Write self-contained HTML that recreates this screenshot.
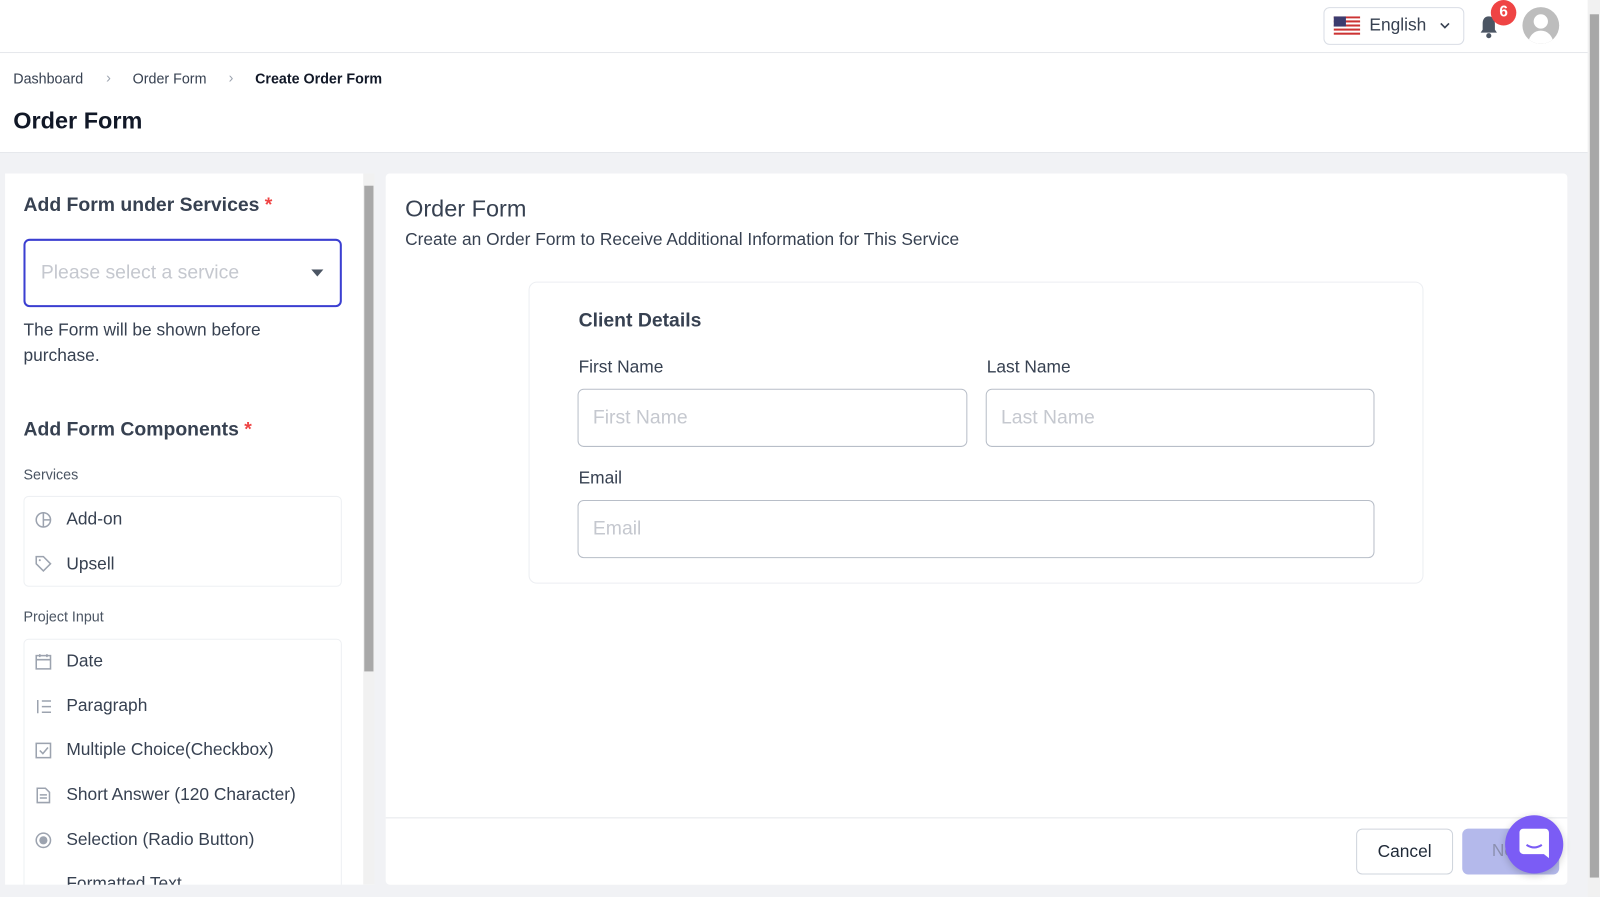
<!DOCTYPE html>
<html><head><style>
*{box-sizing:border-box;margin:0;padding:0}
html,body{width:1600px;height:897px;overflow:hidden}
body{font-family:"Liberation Sans",sans-serif;background:#f1f2f5;color:#1f2937}
#w{position:absolute;left:0;top:0;width:1568px;height:879px;transform:scale(1.020408);transform-origin:0 0;background:#f1f2f5}
.a{position:absolute}
.ph{color:#c5c8cf}
.item{position:absolute;left:65px;font-size:17px;color:#374151}
.ic{position:absolute;left:34px;width:17px;height:17px}
</style></head><body><div id="w">
<div class="a" style="left:0;top:0;width:1556px;height:150px;background:#fff"></div>
<div class="a" style="left:0;top:51px;width:1556px;height:1px;background:#e5e7eb"></div>
<div class="a" style="left:0;top:149px;width:1556px;height:1px;background:#e5e7eb"></div>
<div class="a" style="left:1297px;top:7px;width:138px;height:37px;border:1px solid #d9dde5;border-radius:6px;background:#fff"></div>
<svg class="a" style="left:1307px;top:16px" width="26" height="19"><rect width="26" height="19" fill="#fff"/><g fill="#c33"><rect y="0" width="26" height="2"/><rect y="4" width="26" height="2"/><rect y="8" width="26" height="2"/><rect y="12" width="26" height="2"/><rect y="16" width="26" height="2"/></g><rect width="12" height="10" fill="#3c3b6e"/></svg>
<div class="a" style="left:1342px;top:15px;font-size:17px;color:#374151">English</div>
<svg class="a" style="left:1411px;top:21px" width="10" height="8"><path d="M1 2l4 4 4-4" stroke="#374151" stroke-width="1.6" fill="none"/></svg>
<svg class="a" style="left:1449px;top:14px" width="20" height="24"><path d="M10 2c-4 0-6 3-6 7v6l-2 3h16l-2-3V9c0-4-2-7-6-7z" fill="#4b5563"/><circle cx="10" cy="21" r="2.5" fill="#4b5563"/></svg>
<div class="a" style="left:1461px;top:0;width:25px;height:25px;border-radius:50%;background:#ef4444;color:#fff;font-size:15px;font-weight:bold;text-align:center;line-height:24px">6</div>
<div class="a" style="left:1492px;top:7px;width:36px;height:36px;border-radius:50%;background:#bdbdbd;overflow:hidden"><div class="a" style="left:11px;top:7px;width:14px;height:14px;border-radius:50%;background:#fff"></div><div class="a" style="left:6px;top:23px;width:24px;height:14px;border-radius:12px 12px 0 0;background:#fff"></div></div>
<div class="a" style="left:13px;top:69px;font-size:14px;color:#374151">Dashboard</div>
<div class="a" style="left:104px;top:68px;font-size:14px;color:#9ca3af">›</div>
<div class="a" style="left:130px;top:69px;font-size:14px;color:#374151">Order Form</div>
<div class="a" style="left:224px;top:68px;font-size:14px;color:#9ca3af">›</div>
<div class="a" style="left:250px;top:69px;font-size:14px;color:#111827;font-weight:bold">Create Order Form</div>
<div class="a" style="left:13px;top:105px;font-size:23px;color:#111827;font-weight:bold">Order Form</div>
<div class="a" style="left:1556px;top:0;width:12px;height:879px;background:#f1f1f1"></div>
<div class="a" style="left:1558px;top:14px;width:9px;height:846px;background:#a8a8a8"></div>
<div class="a" style="left:5px;top:170px;width:362px;height:697px;background:#fff;overflow:hidden">
 <div class="a" style="left:351px;top:0;width:11px;height:697px;background:#f1f1f1"></div>
 <div class="a" style="left:352px;top:12px;width:9px;height:476px;background:#a8a8a8"></div>
 <div class="a" style="left:18px;top:21px;font-size:19px;font-weight:bold;color:#374151">Add Form under Services <span style="color:#ef4444">*</span></div>
 <div class="a" style="left:18px;top:64px;width:312px;height:67px;border:2px solid #3b3fd1;border-radius:6px"></div>
 <div class="a ph" style="left:35px;top:87px;font-size:19px">Please select a service</div>
 <svg class="a" style="left:300px;top:94px" width="12" height="7"><path d="M0 0h12L6 7z" fill="#4b5563"/></svg>
 <div class="a" style="left:18px;top:141px;font-size:17px;line-height:25px;color:#374151;width:270px">The Form will be shown before purchase.</div>
 <div class="a" style="left:18px;top:241px;font-size:19px;font-weight:bold;color:#374151">Add Form Components <span style="color:#ef4444">*</span></div>
 <div class="a" style="left:18px;top:287px;font-size:14px;color:#4b5563">Services</div>
 <div class="a" style="left:18px;top:316px;width:312px;height:89px;border:1px solid #eef0f3;border-radius:5px"></div>
 <div class="a" style="left:18px;top:426px;font-size:14px;color:#4b5563">Project Input</div>
 <div class="a" style="left:18px;top:456px;width:312px;height:260px;border:1px solid #eef0f3;border-radius:5px"></div>
</div>
<svg class="ic a" style="top:501px" viewBox="0 0 17 17"><circle cx="8.5" cy="8.5" r="7" fill="none" stroke="#9ca3af" stroke-width="1.5"/><path d="M8.5 1.5v14M8.5 8.5h7" stroke="#9ca3af" stroke-width="1.5"/></svg>
<div class="item" style="top:499px">Add-on</div>
<svg class="ic a" style="top:544px" viewBox="0 0 17 17"><path d="M1.5 1.5h7l7 7-7 7-7-7z" fill="none" stroke="#9ca3af" stroke-width="1.5"/><circle cx="5" cy="5" r="1" fill="#9ca3af"/></svg>
<div class="item" style="top:543px">Upsell</div>
<svg class="ic a" style="top:640px" viewBox="0 0 17 17"><rect x="1.5" y="2.5" width="14" height="13" fill="none" stroke="#9ca3af" stroke-width="1.5"/><path d="M1.5 6.5h14M5 1v3M12 1v3" stroke="#9ca3af" stroke-width="1.5"/></svg>
<div class="item" style="top:638px">Date</div>
<svg class="ic a" style="top:684px" viewBox="0 0 17 17"><path d="M3 2v13M7 3h9M7 8.5h9M7 14h9" stroke="#9ca3af" stroke-width="1.5"/></svg>
<div class="item" style="top:682px">Paragraph</div>
<svg class="ic a" style="top:727px" viewBox="0 0 17 17"><rect x="1.5" y="1.5" width="14" height="14" fill="none" stroke="#9ca3af" stroke-width="1.5"/><path d="M5 8.5l3 3 5-6" stroke="#9ca3af" stroke-width="1.5" fill="none"/></svg>
<div class="item" style="top:725px">Multiple Choice(Checkbox)</div>
<svg class="ic a" style="top:771px" viewBox="0 0 17 17"><path d="M2.5 1.5h8l4 4v10h-12z" fill="none" stroke="#9ca3af" stroke-width="1.5"/><path d="M5 8h7M5 11h7" stroke="#9ca3af" stroke-width="1.5"/></svg>
<div class="item" style="top:769px">Short Answer (120 Character)</div>
<svg class="ic a" style="top:815px" viewBox="0 0 17 17"><circle cx="8.5" cy="8.5" r="7" fill="none" stroke="#9ca3af" stroke-width="1.5"/><circle cx="8.5" cy="8.5" r="4" fill="#9ca3af"/></svg>
<div class="item" style="top:813px">Selection (Radio Button)</div>
<div class="item" style="top:856px;height:11px;overflow:hidden">Formatted Text</div>
<div class="a" style="left:378px;top:170px;width:1158px;height:697px;background:#fff;border-radius:4px"></div>
<div class="a" style="left:378px;top:801px;width:1158px;height:1px;background:#e5e7eb"></div>
<div class="a" style="left:397px;top:191px;font-size:23px;color:#374151">Order Form</div>
<div class="a" style="left:397px;top:225px;font-size:17px;color:#374151">Create an Order Form to Receive Additional Information for This Service</div>
<div class="a" style="left:518px;top:276px;width:877px;height:296px;border:1px solid #eceef2;border-radius:8px"></div>
<div class="a" style="left:567px;top:304px;font-size:19px;font-weight:bold;color:#374151">Client Details</div>
<div class="a" style="left:567px;top:350px;font-size:17px;color:#374151">First Name</div>
<div class="a" style="left:967px;top:350px;font-size:17px;color:#374151">Last Name</div>
<div class="a" style="left:566px;top:381px;width:382px;height:57px;border:1px solid #b8bec8;border-radius:6px"></div>
<div class="a ph" style="left:581px;top:399px;font-size:19px">First Name</div>
<div class="a" style="left:966px;top:381px;width:381px;height:57px;border:1px solid #b8bec8;border-radius:6px"></div>
<div class="a ph" style="left:981px;top:399px;font-size:19px">Last Name</div>
<div class="a" style="left:567px;top:459px;font-size:17px;color:#374151">Email</div>
<div class="a" style="left:566px;top:490px;width:781px;height:57px;border:1px solid #b8bec8;border-radius:6px"></div>
<div class="a ph" style="left:581px;top:508px;font-size:19px">Email</div>
<div class="a" style="left:1329px;top:812px;width:95px;height:45px;border:1px solid #cfd4dc;border-radius:6px;font-size:17px;text-align:center;line-height:43px;color:#1f2937">Cancel</div>
<div class="a" style="left:1433px;top:812px;width:95px;height:45px;background:#b4b9eb;border-radius:6px;font-size:17px;line-height:43px;padding-left:29px;color:#8c90b0">Next</div>
<div class="a" style="left:1475px;top:799px;width:57px;height:57px;border-radius:50%;background:#7b5cf5;box-shadow:0 2px 8px rgba(0,0,0,.2)"></div>
<svg class="a" style="left:1489px;top:812px" width="29" height="30"><path d="M4 0h21a4 4 0 014 4v25l-5-4H4a4 4 0 01-4-4V4a4 4 0 014-4z" fill="#fff"/><path d="M7 16q7.5 5 15 0" stroke="#7b5cf5" stroke-width="2" fill="none"/></svg>
</div></body></html>
